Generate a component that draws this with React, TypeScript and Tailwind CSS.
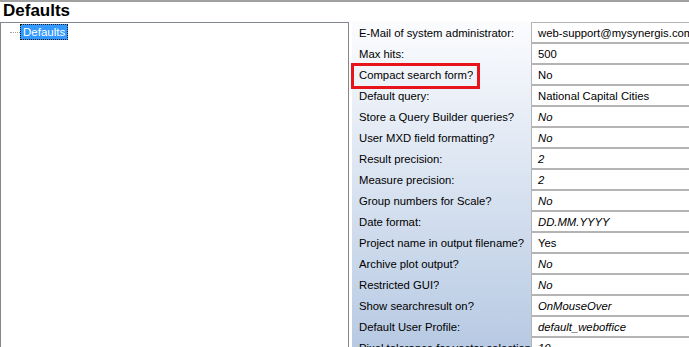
const rows: { label: string; value: string; italic?: boolean }[] = [
  { label: "E-Mail of system administrator:", value: "web-support@mysynergis.com" },
  { label: "Max hits:", value: "500" },
  { label: "Compact search form?", value: "No" },
  { label: "Default query:", value: "National Capital Cities" },
  { label: "Store a Query Builder queries?", value: "No", italic: true },
  { label: "User MXD field formatting?", value: "No", italic: true },
  { label: "Result precision:", value: "2", italic: true },
  { label: "Measure precision:", value: "2", italic: true },
  { label: "Group numbers for Scale?", value: "No", italic: true },
  { label: "Date format:", value: "DD.MM.YYYY", italic: true },
  { label: "Project name in output filename?", value: "Yes" },
  { label: "Archive plot output?", value: "No", italic: true },
  { label: "Restricted GUI?", value: "No", italic: true },
  { label: "Show searchresult on?", value: "OnMouseOver", italic: true },
  { label: "Default User Profile:", value: "default_weboffice", italic: true },
  { label: "Pixel tolerance for vector selection:", value: "10", italic: true },
];

export default function App() {
  return (
    <div
      className="h-[347px] w-[689px] overflow-hidden border-t-2 border-[#a0a0a0] bg-white text-black"
      style={{ fontFamily: '"Liberation Sans", Arial, sans-serif' }}
    >
      <div className="h-[20px] pl-[3px] text-[17px] leading-[18px] font-bold">Defaults</div>

      <div className="flex">
        {/* tree */}
        <div className="h-[330px] w-[349px] shrink-0 border border-[#828790] bg-white">
          <div className="flex items-center pt-[1px] pl-[9px]">
            <span className="w-[10px] border-t border-dotted border-[#a0a0a0]" />
            <span className="border border-dotted border-[#1a1a1a] bg-[#3399ff] px-[2px] text-[11.5px] leading-[14px] text-white">
              Defaults
            </span>
          </div>
        </div>

        {/* property grid */}
        <div className="ml-[3px] flex">
          <div className="w-[179px] shrink-0 bg-gradient-to-b from-[#fbfcfe] to-[#b5c8e2] pt-[1px]">
            {rows.map((r) => (
              <div key={r.label} className="relative flex h-[21px] items-center pl-[7px] text-[11.3px]">
                <span className="overflow-hidden whitespace-nowrap">{r.label}</span>
                {r.label === "Compact search form?" && (
                  <span className="absolute top-[-2px] left-[-1px] h-[26px] w-[129px] border-[3px] border-[#e8141c]" />
                )}
              </div>
            ))}
          </div>
          <div className="w-[200px] shrink-0 border-t border-l border-[#b4b4b4] bg-white">
            {rows.map((r) => (
              <div
                key={r.label}
                className={`flex h-[21px] items-center border-b-2 border-[#b4b4b4] pt-[1px] pl-[6px] text-[11.3px] whitespace-nowrap ${
                  r.italic ? "italic" : ""
                }`}
              >
                {r.value}
              </div>
            ))}
          </div>
        </div>
      </div>
    </div>
  );
}
